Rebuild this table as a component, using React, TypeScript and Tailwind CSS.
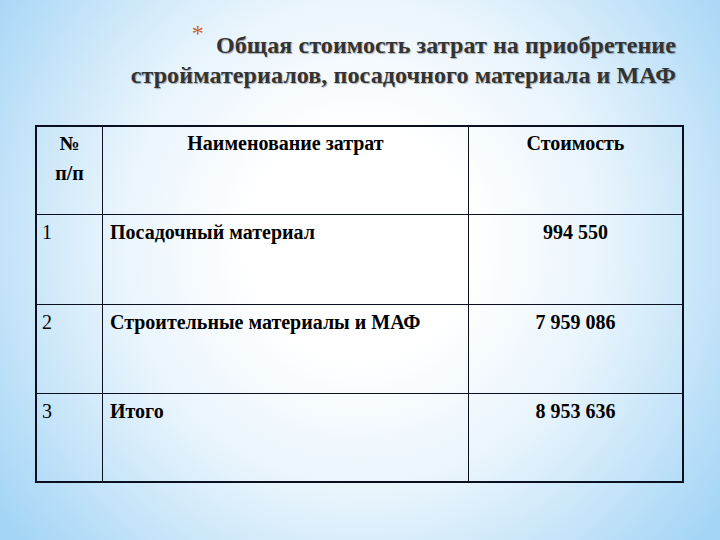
import React from "react";

const rows = [
  { n: "1", name: "Посадочный материал", cost: "994 550", h: "h-[90px]" },
  { n: "2", name: "Строительные материалы и МАФ", cost: "7 959 086", h: "h-[89px]" },
  { n: "3", name: "Итого", cost: "8 953 636", h: "h-[87px]", last: true },
];

export default function App() {
  return (
    <div className="w-[720px] h-[540px] overflow-hidden font-['Liberation_Serif',serif] bg-[radial-gradient(ellipse_62%_85%_at_50%_45%,#ffffff_25%,#e8f4fc_55%,#a4d5f6_100%)]">
      <div className="pt-[30px] pr-[44px] text-right text-[24px] leading-[30px] font-bold text-[#333333] [text-shadow:1px_1px_1px_rgba(0,0,0,0.3)]">
        <div className="tracking-[0.1px]">
          <span className="relative -top-[12px] mr-[12px] text-[24px] font-normal text-[#c8602a] [text-shadow:none]">*</span>
          Общая стоимость затрат на приобретение
        </div>
        <div className="tracking-[0.1px]">стройматериалов, посадочного материала и МАФ</div>
      </div>

      <div className="ml-[35px] mt-[35px] w-[649px] border-2 border-[#0b1020] text-[20px] text-black">
        <div className="grid grid-cols-[66px_366px_1fr] h-[88px] border-b border-[#0b1020]">
          <div className="border-r border-[#0b1020] text-center font-bold leading-[30px] pt-[1px]">
            <div>№</div>
            <div>п/п</div>
          </div>
          <div className="border-r border-[#0b1020] text-center font-bold leading-[32px]">
            Наименование затрат
          </div>
          <div className="text-center font-bold leading-[32px]">Стоимость</div>
        </div>
        {rows.map((r) => (
          <div
            key={r.n}
            className={`grid grid-cols-[66px_366px_1fr] ${r.h} ${r.last ? "" : "border-b border-[#0b1020]"}`}
          >
            <div className="border-r border-[#0b1020] pl-[5px] leading-[34px]">{r.n}</div>
            <div className="border-r border-[#0b1020] pl-[7px] font-bold leading-[34px]">{r.name}</div>
            <div className="text-center font-bold leading-[34px]">{r.cost}</div>
          </div>
        ))}
      </div>
    </div>
  );
}
